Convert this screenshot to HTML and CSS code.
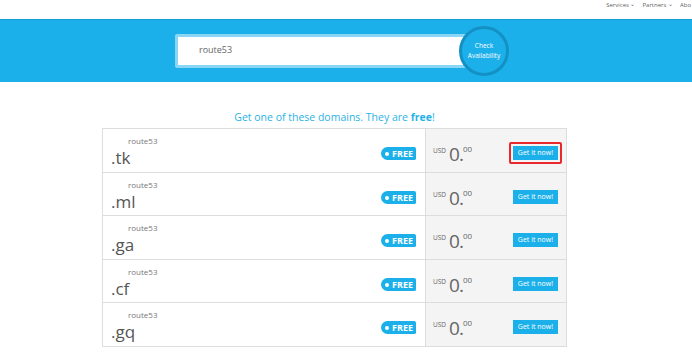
FILE: index.html
```html
<!DOCTYPE html>
<html lang="en">
<head>
  <meta charset="UTF-8">
  <title>Domains</title>
  <link rel="stylesheet" href="styles.css">
</head>
<body>

  <div class="topbar">
    <nav class="topnav">
      <span>Services <i class="caret">&#8964;</i></span>
      <span>Partners <i class="caret">&#8964;</i></span>
      <span>Abo</span>
    </nav>
  </div>

  <div class="band">
    <div class="search">
      <div class="search-frame">
        <div class="search-input">route53</div>
      </div>
      <div class="check">Check<br>Availability</div>
    </div>
  </div>

  <div class="content">
    <h2 class="title">Get one of these domains. They are <strong>free</strong>!</h2>

    <div class="domains">
      <div class="row">
        <div class="name">
          <div class="sld">route53</div>
          <div class="tld">.tk</div>
          <span class="free">FREE</span>
        </div>
        <div class="price">
          <span class="usd">USD</span><span class="zero">0.</span><sup class="cents">00</sup>
          <span class="btn-wrap picked"><span class="btn">Get it now!</span></span>
        </div>
      </div>
      <div class="row">
        <div class="name">
          <div class="sld">route53</div>
          <div class="tld">.ml</div>
          <span class="free">FREE</span>
        </div>
        <div class="price">
          <span class="usd">USD</span><span class="zero">0.</span><sup class="cents">00</sup>
          <span class="btn-wrap"><span class="btn">Get it now!</span></span>
        </div>
      </div>
      <div class="row">
        <div class="name">
          <div class="sld">route53</div>
          <div class="tld">.ga</div>
          <span class="free">FREE</span>
        </div>
        <div class="price">
          <span class="usd">USD</span><span class="zero">0.</span><sup class="cents">00</sup>
          <span class="btn-wrap"><span class="btn">Get it now!</span></span>
        </div>
      </div>
      <div class="row">
        <div class="name">
          <div class="sld">route53</div>
          <div class="tld">.cf</div>
          <span class="free">FREE</span>
        </div>
        <div class="price">
          <span class="usd">USD</span><span class="zero">0.</span><sup class="cents">00</sup>
          <span class="btn-wrap"><span class="btn">Get it now!</span></span>
        </div>
      </div>
      <div class="row">
        <div class="name">
          <div class="sld">route53</div>
          <div class="tld">.gq</div>
          <span class="free">FREE</span>
        </div>
        <div class="price">
          <span class="usd">USD</span><span class="zero">0.</span><sup class="cents">00</sup>
          <span class="btn-wrap"><span class="btn">Get it now!</span></span>
        </div>
      </div>
    </div>
  </div>

</body>
</html>
```

FILE: styles.css
```css
html, body {
  margin: 0;
  padding: 0;
  height: 100%;
  font-family: "Open Sans", sans-serif;
  overflow: hidden;
  background: #fff;
}

.topbar {
  height: 19px;
  border-bottom: 1px solid #0f9dd3;
  display: flex;
  justify-content: flex-end;
  align-items: flex-start;
}

.topnav {
  display: flex;
  gap: 7px;
  font-size: 6px;
  color: #666;
  padding-top: 1px;
  margin-right: 1px;
  white-space: nowrap;
}

.caret {
  font-style: normal;
  font-size: 6px;
  position: relative;
  top: -1px;
}

.band {
  height: 62px;
  background: #1bb0ea;
  display: flex;
  align-items: center;
}

.search {
  display: flex;
  align-items: center;
  margin-left: 175px;
}

.search-frame {
  width: 286px;
  height: 28px;
  padding: 3px;
  background: #8ad6f5;
  border-radius: 2px;
  margin-right: -8px;
}

.search-input {
  height: 100%;
  background: #fff;
  font-size: 9px;
  color: #666;
  line-height: 26px;
  padding-left: 21px;
  box-sizing: border-box;
}

.check {
  position: relative;
  width: 44px;
  height: 44px;
  border-radius: 50%;
  background: #1bb0ea;
  border: 3px solid #1391c4;
  color: #fff;
  font-size: 6.5px;
  line-height: 10px;
  display: flex;
  align-items: center;
  justify-content: center;
  text-align: center;
}

.content {
  width: 465px;
  margin-left: 102px;
}

.title {
  margin: 25px 0 1px;
  font-size: 10.5px;
  font-weight: normal;
  color: #2ab3e6;
  text-align: center;
  line-height: 20px;
}

.title strong {
  font-weight: bold;
}

.domains {
  border: 1px solid #ddd;
  border-top: none;
}

.row {
  display: flex;
  height: 43.6px;
  border-top: 1px solid #ddd;
  box-sizing: border-box;
}

.name {
  position: relative;
  width: 323px;
  border-right: 1px solid #ddd;
  padding-left: 8px;
  box-sizing: border-box;
}

.sld {
  font-size: 8px;
  color: #777;
  margin: 6px 0 0 17px;
  line-height: 11px;
}

.tld {
  font-size: 17px;
  color: #555;
  line-height: 20px;
  margin-top: 2px;
}

.free {
  position: absolute;
  right: 9px;
  top: 18px;
  height: 13px;
  padding: 0 3px 0 11px;
  background: #1bb0ea;
  color: #fff;
  font-size: 9px;
  font-weight: bold;
  line-height: 13px;
  border-radius: 7px 2px 2px 7px;
}

.free::before {
  content: "";
  position: absolute;
  left: 4px;
  top: 5px;
  width: 4px;
  height: 4px;
  border-radius: 50%;
  background: #fff;
}

.price {
  flex: 1;
  background: #f4f4f4;
  display: flex;
  align-items: flex-start;
  padding: 0 4px 0 7px;
  color: #666;
}

.usd {
  font-size: 6.5px;
  margin-top: 17px;
  margin-right: 3px;
}

.zero {
  font-size: 19px;
  line-height: 20px;
  margin-top: 15px;
  letter-spacing: -1px;
}

.cents {
  font-size: 8px;
  margin-top: 14px;
  vertical-align: top;
}

.btn-wrap {
  margin-left: auto;
  margin-top: 13px;
  padding: 2px;
  border: 2px solid transparent;
  border-radius: 2px;
}

.btn-wrap.picked {
  border-color: #e8282b;
}

.btn {
  display: block;
  background: #1bb0ea;
  color: #fff;
  font-size: 7px;
  line-height: 14px;
  padding: 0 5px;
}
```
